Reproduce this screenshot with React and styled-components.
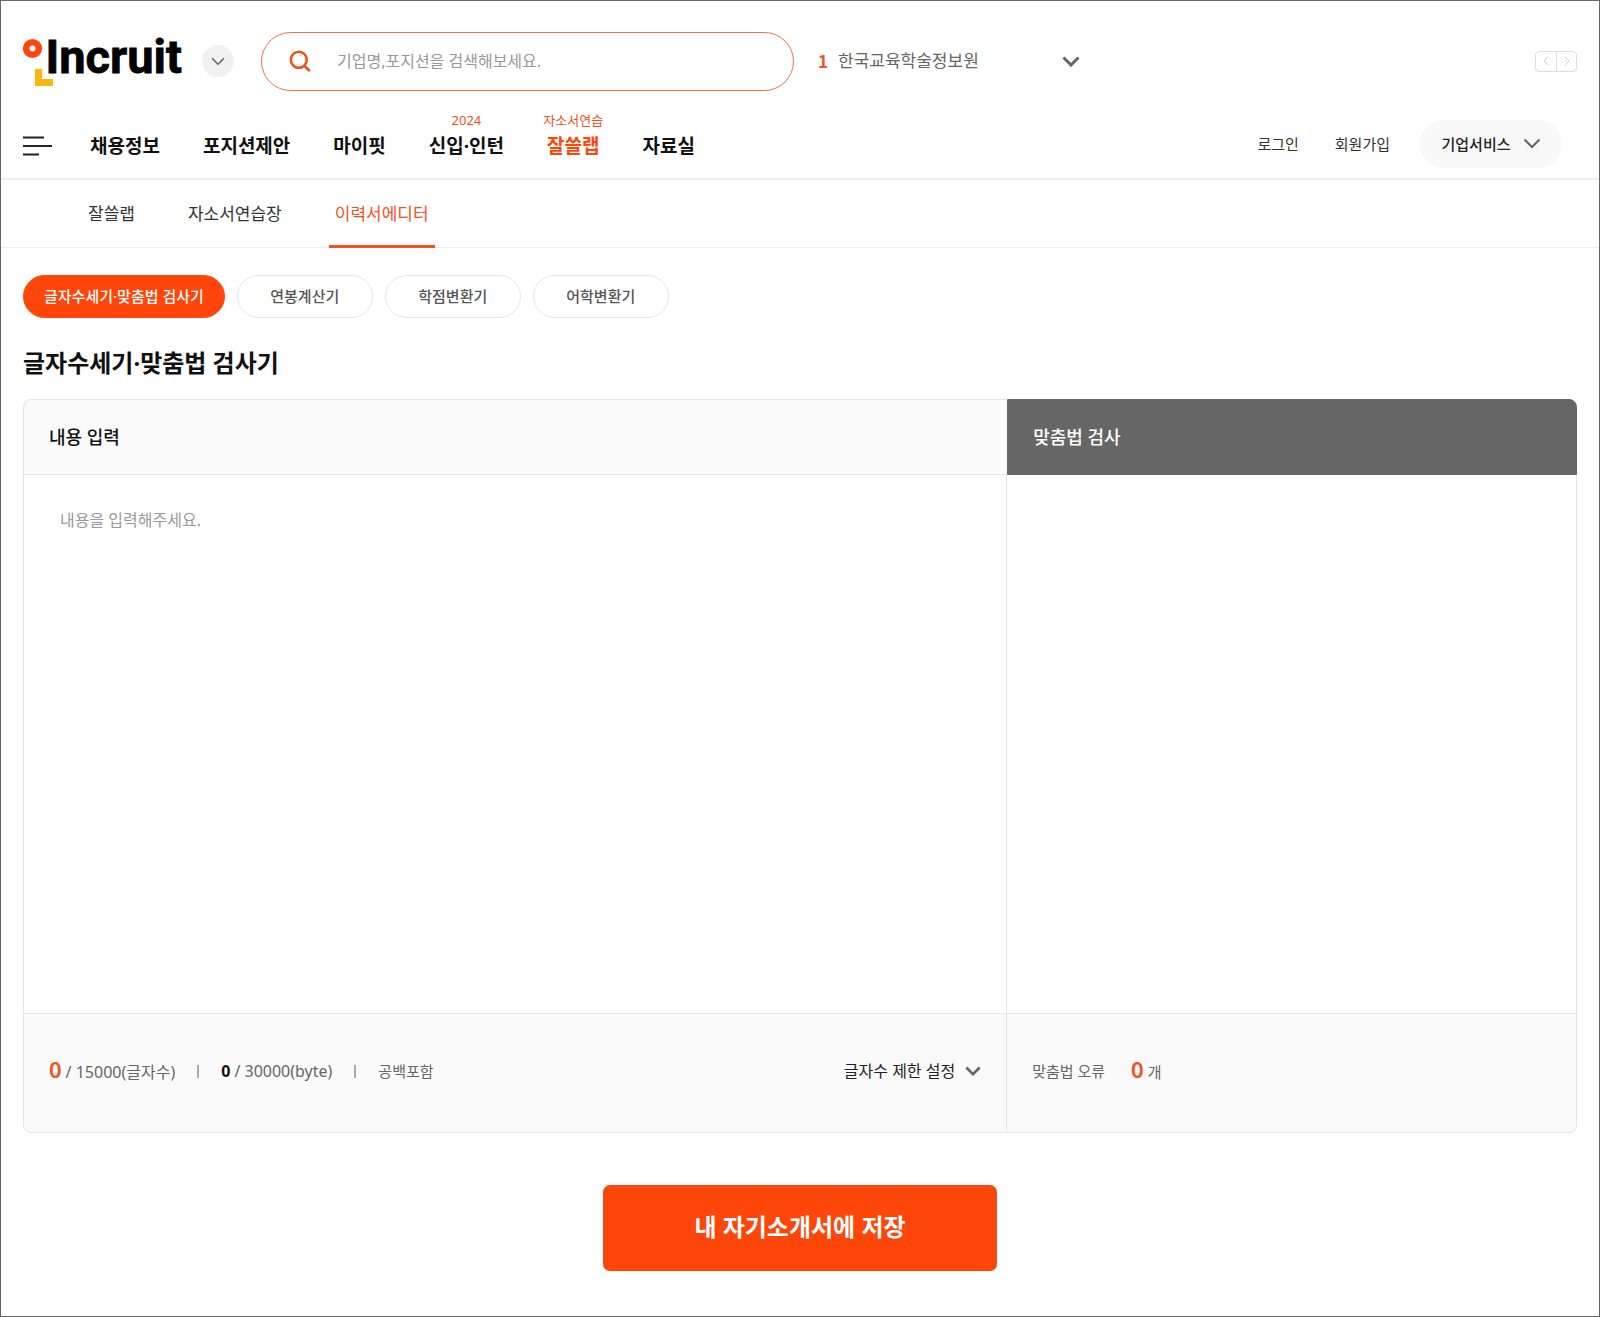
import React, { useState } from 'react'
import styled, { createGlobalStyle } from 'styled-components'

const navItems = [
  { label: '채용정보' },
  { label: '포지션제안' },
  { label: '마이핏' },
  { label: '신입·인턴', sub: '2024' },
  { label: '잘쓸랩', sub: '자소서연습', active: true },
  { label: '자료실' },
]

const tabs = ['잘쓸랩', '자소서연습장', '이력서에디터']
const tools = ['글자수세기·맞춤법 검사기', '연봉계산기', '학점변환기', '어학변환기']

const Chevron = ({ width = 18, height = 11, stroke = 2, color = '#666' }) => (
  <svg width={width} height={height} viewBox="0 0 18 11" fill="none" stroke={color} strokeWidth={stroke} aria-hidden="true">
    <path d="M1.5 1.5 9 9l7.500-7.500" />
  </svg>
)

const Logo = () => (
  <svg width="168" height="68" viewBox="0 -4 168 68" role="img" aria-label="Incruit">
    <circle cx="9.500" cy="17.500" r="6.300" fill="none" stroke="#ff460a" strokeWidth="6.600" />
    <path d="M12 38h7v10h11v7H12z" fill="#ffb40f" />
    <text x="22.500" y="41.500" fontFamily="Roboto, sans-serif" fontWeight="700" fontSize="47" fill="#000" stroke="#000" strokeWidth="0.800">Incruit</text>
  </svg>
)

const Header = () => (
  <HeaderWrap>
    <TopRow>
      <LogoLink href="#"><Logo /></LogoLink>
      <RoundButton type="button" aria-label="서비스 더보기">
        <Chevron width={14} height={9} stroke={2} />
      </RoundButton>
      <Search role="search">
        <svg width="22" height="22" viewBox="0 0 22 22" fill="none" stroke="#f4511e" strokeWidth="2.600" strokeLinecap="round" aria-hidden="true">
          <circle cx="9.800" cy="9.800" r="8" />
          <path d="M15.800 16.300 20 20.300" />
        </svg>
        <input type="text" aria-label="검색" placeholder="기업명,포지션을 검색해보세요." />
      </Search>
      <Rank>
        <em>1</em>
        <a href="#">한국교육학술정보원</a>
        <button type="button" aria-label="순위 펼치기"><Chevron stroke={3} /></button>
      </Rank>
      <Pager>
        <button type="button" aria-label="이전">
          <svg width="6" height="10" viewBox="0 0 6 10" fill="none" stroke="#ccc"><path d="M5 1 1 5l4 4" /></svg>
        </button>
        <button type="button" aria-label="다음">
          <svg width="6" height="10" viewBox="0 0 6 10" fill="none" stroke="#ccc"><path d="m1 1 4 4-4 4" /></svg>
        </button>
      </Pager>
    </TopRow>
    <NavRow>
      <MenuButton type="button" aria-label="전체메뉴">
        <svg width="30" height="20" viewBox="0 0 30 20" stroke="#222" strokeWidth="2" aria-hidden="true">
          <path d="M0 1.500h21M0 10h29M0 18.500h16" />
        </svg>
      </MenuButton>
      <Nav>
        {navItems.map(({ label, sub, active }) => (
          <NavLink key={label} href="#" $active={active}>
            {sub && <small>{sub}</small>}
            {label}
          </NavLink>
        ))}
      </Nav>
      <UserMenu>
        <a href="#">로그인</a>
        <a href="#">회원가입</a>
        <CompanyButton type="button">
          기업서비스
          <Chevron />
        </CompanyButton>
      </UserMenu>
    </NavRow>
  </HeaderWrap>
)

const Editor = () => {
  const [text, setText] = useState('')
  const bytes = new TextEncoder().encode(text).length

  return (
    <Panel>
      <PanelHead><label htmlFor="content">내용 입력</label></PanelHead>
      <PanelHead $dark>맞춤법 검사</PanelHead>
      <TextBox id="content" placeholder="내용을 입력해주세요." value={text} onChange={(e) => setText(e.target.value)} />
      <Result />
      <PanelFoot>
        <Count><Big>{text.length}</Big>/ 15000(글자수)</Count>
        <Bar />
        <Count><strong>{bytes}</strong>/ 30000(byte)</Count>
        <Bar />
        <span>공백포함</span>
        <LimitButton type="button">
          글자수 제한 설정
          <Chevron width={16} height={10} stroke={3} />
        </LimitButton>
      </PanelFoot>
      <PanelFoot $side>
        <span>맞춤법 오류</span>
        <Count $errors><Big>0</Big>개</Count>
      </PanelFoot>
    </Panel>
  )
}

const App = () => {
  return (
    <Page>
      <GlobalStyle />
      <Header />
      <TabBar>
        {tabs.map((tab, i) => (
          <Tab key={tab} href="#" $active={i === 2}>{tab}</Tab>
        ))}
      </TabBar>
      <Main>
        <Tools>
          {tools.map((tool, i) => (
            <Pill key={tool} href="#" $active={i === 0}>{tool}</Pill>
          ))}
        </Tools>
        <Title>글자수세기·맞춤법 검사기</Title>
        <Editor />
        <SaveButton type="button">내 자기소개서에 저장</SaveButton>
      </Main>
    </Page>
  )
}

const GlobalStyle = createGlobalStyle`
* {
  box-sizing: border-box;
}
body {
  margin: 0;
  color: #111;
  background: #fff;
  line-height: 24px;
}
body, button, input, textarea {
  font-family: "Noto Sans", "Noto Sans CJK KR", sans-serif;
}
a {
  color: inherit;
  text-decoration: none;
}
button {
  display: flex;
  align-items: center;
  justify-content: center;
  padding: 0;
  border: 0;
  background: none;
  color: inherit;
  line-height: 24px;
  cursor: pointer;
}
`

const Page = styled.div`
min-height: 100vh;
border: 1px solid #666;
`

const HeaderWrap = styled.header`
padding: 30px 22px 0;
border-bottom: 2px solid #eee;
`

const TopRow = styled.div`
display: flex;
align-items: center;
height: 60px;
`

const LogoLink = styled.a`
display: flex;
flex-shrink: 0;
margin-right: 11px;
`

const RoundButton = styled.button`
width: 32px;
height: 32px;
margin-right: 27px;
border-radius: 50%;
background: #f1f1f1;
`

const Search = styled.form`
display: flex;
align-items: center;
gap: 26px;
flex: 0 1 533px;
height: 59px;
padding: 0 27px;
border: 1px solid #ee6f4a;
border-radius: 30px;
input {
  flex: 1;
  min-width: 0;
  height: 40px;
  padding: 0;
  border: 0;
  outline: 0;
  font-size: 16px;
  line-height: 40px;
  &::placeholder {
    color: #999;
    opacity: 1;
  }
}
`

const Rank = styled.div`
display: flex;
align-items: center;
width: 262px;
margin-left: 24px;
font-size: 17px;
color: #666;
em {
  margin-right: 10px;
  font-family: "Noto Sans CJK KR", sans-serif;
  font-style: normal;
  font-weight: 700;
  color: #f4511e;
}
button {
  margin-left: auto;
}
`

const Pager = styled.div`
display: flex;
margin-left: auto;
border: 1px solid #ddd;
border-radius: 4px;
button {
  width: 20px;
  height: 19px;
}
button + button {
  border-left: 1px solid #ddd;
}
`

const NavRow = styled.div`
display: flex;
align-items: center;
height: 87px;
padding-top: 22px;
`

const MenuButton = styled.button`
margin-right: 37px;
`

const Nav = styled.nav`
display: flex;
gap: 43px;
`

const NavLink = styled.a`
position: relative;
font-size: 19px;
font-weight: 700;
line-height: 28px;
color: ${({ $active }) => ($active ? '#ff460a' : '#111')};
small {
  position: absolute;
  left: 50%;
  bottom: 100%;
  transform: translateX(-50%);
  font-size: 13px;
  font-weight: 400;
  line-height: 24px;
  white-space: nowrap;
  color: #f4511e;
}
`

const UserMenu = styled.div`
display: flex;
align-items: center;
gap: 36px;
margin-left: auto;
margin-right: 15px;
margin-bottom: 4px;
font-size: 15px;
color: #333;
`

const CompanyButton = styled.button`
gap: 12px;
width: 142px;
height: 48px;
margin-left: -6px;
border-radius: 24px;
background: #f8f8f8;
font-size: 15px;
font-weight: 500;
color: #222;
`

const TabBar = styled.nav`
display: flex;
gap: 41px;
height: 68px;
padding-left: 81px;
border-bottom: 1px solid #eee;
`

const Tab = styled.a`
height: 68px;
padding: 0 6px;
border-bottom: 3px solid ${({ $active }) => ($active ? '#f4511e' : 'transparent')};
font-size: 17px;
line-height: 67px;
color: ${({ $active }) => ($active ? '#f4511e' : '#333')};
`

const Main = styled.main`
padding: 27px 22px 45px;
`

const Tools = styled.div`
display: flex;
gap: 12px;
`

const Pill = styled.a`
min-width: 136px;
height: 43px;
padding: 0 20px;
border: 1px solid ${({ $active }) => ($active ? '#ff460a' : '#e5e5e5')};
border-radius: 22px;
background: ${({ $active }) => ($active ? '#ff460a' : '#fff')};
color: ${({ $active }) => ($active ? '#fff' : '#555')};
font-size: 15px;
font-weight: 500;
line-height: 41px;
text-align: center;
`

const Title = styled.h1`
margin: 27px 0 18px;
font-size: 24px;
font-weight: 700;
line-height: 36px;
`

const Panel = styled.section`
display: grid;
grid-template-columns: 19fr 11fr;
grid-template-rows: 76px 538px 120px;
`

const PanelHead = styled.h2`
margin: 0;
padding-left: 25px;
border: 1px solid ${({ $dark }) => ($dark ? '#666' : '#e5e5e5')};
border-radius: ${({ $dark }) => ($dark ? '0 8px 0 0' : '8px 0 0 0')};
border-right-width: ${({ $dark }) => ($dark ? '1px' : '0')};
background: ${({ $dark }) => ($dark ? '#666' : '#fafafa')};
color: ${({ $dark }) => ($dark ? '#fff' : '#111')};
font-size: 18px;
font-weight: 500;
line-height: 74px;
`

const TextBox = styled.textarea`
padding: 32px 36px;
border: 0;
border-left: 1px solid #e5e5e5;
border-right: 1px solid #e5e5e5;
outline: 0;
resize: none;
font-size: 16px;
line-height: 26px;
color: #333;
&::placeholder {
  color: #999;
  opacity: 1;
}
`

const Result = styled.div`
border-right: 1px solid #e5e5e5;
`

const PanelFoot = styled.div`
display: flex;
align-items: center;
padding: 0 25px 4px;
border: 1px solid #e5e5e5;
border-left-width: ${({ $side }) => ($side ? '0' : '1px')};
border-radius: ${({ $side }) => ($side ? '0 0 8px 0' : '0 0 0 8px')};
background: #fafafa;
font-size: 15px;
color: #666;
`

const Count = styled.span`
display: flex;
align-items: baseline;
gap: 4px;
margin-left: ${({ $errors }) => ($errors ? '26px' : '0')};
font-size: ${({ $errors }) => ($errors ? '15px' : '16px')};
strong {
  color: #111;
}
`

const Big = styled.b`
font-size: 22px;
font-weight: 600;
line-height: 20px;
color: #f4511e;
`

const Bar = styled.i`
width: 2px;
height: 13px;
margin: 0 22px;
background: #aaa;
`

const LimitButton = styled.button`
gap: 10px;
margin-left: auto;
font-size: 16px;
color: #222;
`

const SaveButton = styled.button`
width: 394px;
max-width: 100%;
height: 86px;
margin: 52px auto 0;
padding-bottom: 2px;
border-radius: 7px;
background: #ff460a;
color: #fff;
font-size: 24px;
font-weight: 700;
`

export default App
